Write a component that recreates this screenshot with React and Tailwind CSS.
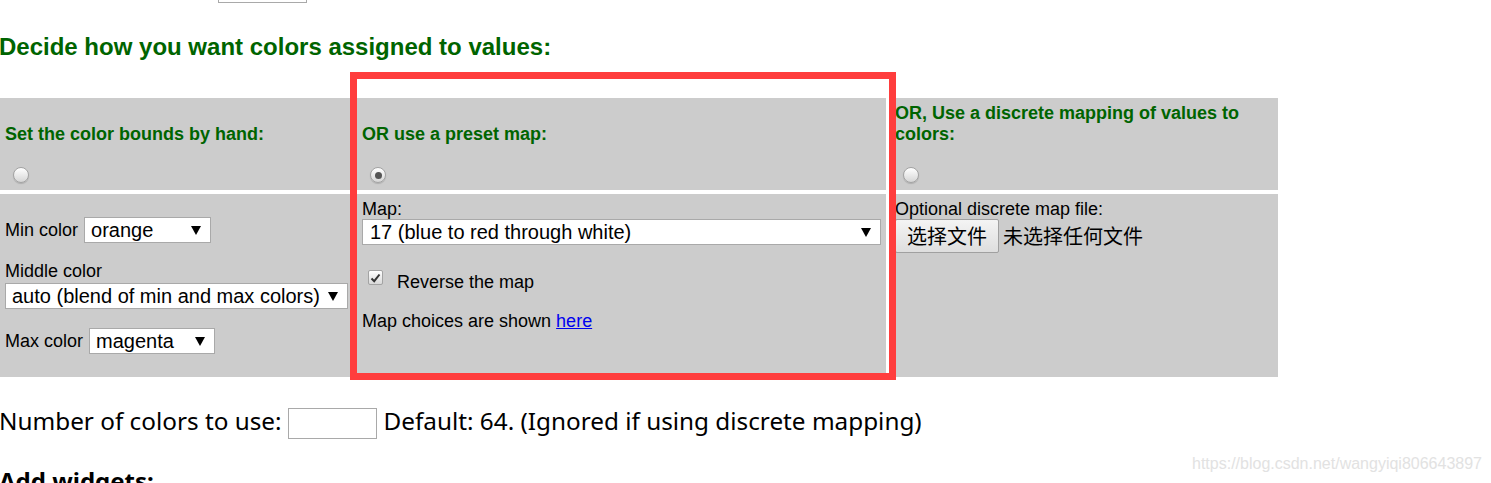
import React from 'react';

const Arrow = () => (
    <svg width="10" height="9" viewBox="0 0 10 9" className="shrink-0">
        <path d="M0 0 L10 0 L5 9 Z" fill="#000" />
    </svg>
);

const FakeSelect = ({ value, className }) => (
    <div className={`h-[26px] border border-[#a9a9a9] bg-white flex items-center justify-between pl-[6px] pr-[9px] ${className}`}>
        <span className="text-[20px] leading-[22px] text-black whitespace-nowrap">{value}</span>
        <Arrow />
    </div>
);

const Radio = ({ checked }) => (
    <span className="mt-[22px] ml-[8px] w-[16px] h-[16px] rounded-full border border-[#a3a3a3] bg-gradient-to-b from-[#ffffff] to-[#d6d6d6] shadow-[0_1px_1px_rgba(0,0,0,0.15)] flex items-center justify-center">
        {checked && <span className="w-[7px] h-[7px] rounded-full bg-[#555555]" />}
    </span>
);

const Heading = ({ children }) => (
    <h4 className="text-[18px] leading-[21px] font-bold text-[#006400]">{children}</h4>
);

export default function App() {
    return (
        <div className="relative w-full h-[483px] overflow-hidden bg-white text-black font-['Liberation_Sans',Arial,sans-serif]">
            <div className="ml-[218px] -mt-[28px] w-[89px] h-[31px] border border-[#a9a9a9] bg-white" />

            <h2 className="mt-[30px] -ml-[1px] text-[24px] leading-[28px] font-bold text-[#006400] whitespace-nowrap">
                Decide how you want colors assigned to values:
            </h2>

            <div className="mt-[37px] w-[1278px] grid grid-cols-[353px_529px_388px] grid-rows-[92px_183px] gap-[4px]">
                <div className="bg-[#cccccc] flex flex-col justify-end items-start pl-[5px] pb-[7px]">
                    <Heading>Set the color bounds by hand:</Heading>
                    <Radio />
                </div>
                <div className="bg-[#cccccc] flex flex-col justify-end items-start pl-[5px] pb-[7px]">
                    <Heading>OR use a preset map:</Heading>
                    <Radio checked />
                </div>
                <div className="bg-[#cccccc] flex flex-col justify-end items-start pl-[5px] pr-[5px] pb-[7px]">
                    <Heading>OR, Use a discrete mapping of values to colors:</Heading>
                    <Radio />
                </div>

                <div className="bg-[#cccccc] pl-[5px] pt-[23px] text-[18px] leading-[21px]">
                    <div className="flex items-center h-[26px]">
                        <span>Min color</span>
                        <FakeSelect value="orange" className="ml-[6px] w-[127px]" />
                    </div>
                    <div className="mt-[18px]">Middle color</div>
                    <FakeSelect value="auto (blend of min and max colors)" className="mt-[1px] w-[343px]" />
                    <div className="mt-[19px] flex items-center h-[26px]">
                        <span>Max color</span>
                        <FakeSelect value="magenta" className="ml-[6px] w-[126px]" />
                    </div>
                </div>

                <div className="bg-[#cccccc] pl-[5px] pt-[5px] text-[18px] leading-[20px]">
                    <div>Map:</div>
                    <FakeSelect value="17 (blue to red through white)" className="w-[519px] pl-[7px]" />
                    <div className="mt-[25px] flex items-start">
                        <span className="ml-[6px] w-[15px] h-[15px] rounded-[2px] border border-[#a3a3a3] bg-gradient-to-b from-[#ffffff] to-[#d9d9d9] flex items-center justify-center">
                            <svg width="11" height="10" viewBox="0 0 11 10">
                                <path d="M1.5 5.5 L4.2 8.2 L9.5 1.5" stroke="#333" strokeWidth="2" fill="none" />
                            </svg>
                        </span>
                        <span className="ml-[14px] pt-[2px]">Reverse the map</span>
                    </div>
                    <div className="mt-[19px]">
                        Map choices are shown <a href="#" className="text-[#0000ee] underline">here</a>
                    </div>
                </div>

                <div className="bg-[#cccccc] pl-[5px] pt-[5px] text-[18px] leading-[20px]">
                    <div>Optional discrete map file:</div>
                    <div className="flex items-center">
                        <button className="h-[34px] w-[104px] border border-[#a0a0a0] rounded-[2px] bg-gradient-to-b from-[#f4f4f4] to-[#dedede] text-[20px] font-['Noto_Sans_CJK_SC',sans-serif]">
                            选择文件
                        </button>
                        <span className="ml-[4px] text-[20px] font-['Noto_Sans_CJK_SC',sans-serif]">未选择任何文件</span>
                    </div>
                </div>
            </div>

            <div className="mt-[31px] -ml-[1px] flex items-center h-[31px] text-[24.3px] font-['Noto_Sans',sans-serif] whitespace-nowrap">
                <span className="mb-[5px]">Number of colors to use:</span>
                <div className="ml-[6px] w-[89px] h-[31px] border border-[#a9a9a9] bg-white" />
                <span className="ml-[7px] mb-[5px]">Default: 64. (Ignored if using discrete mapping)</span>
            </div>

            <h3 className="mt-[27px] -ml-[1px] text-[24px] leading-[30px] font-bold font-['Noto_Sans',sans-serif]">
                Add widgets:
            </h3>

            <div className="absolute left-[350px] top-[72px] w-[546px] h-[308px] border-[7px] border-[#ff3d3d]" />

            <div className="absolute right-[9px] top-[455px] text-[16px] leading-[18px] text-[#e2e2e2]">
                https://blog.csdn.net/wangyiqi806643897
            </div>
        </div>
    );
}
